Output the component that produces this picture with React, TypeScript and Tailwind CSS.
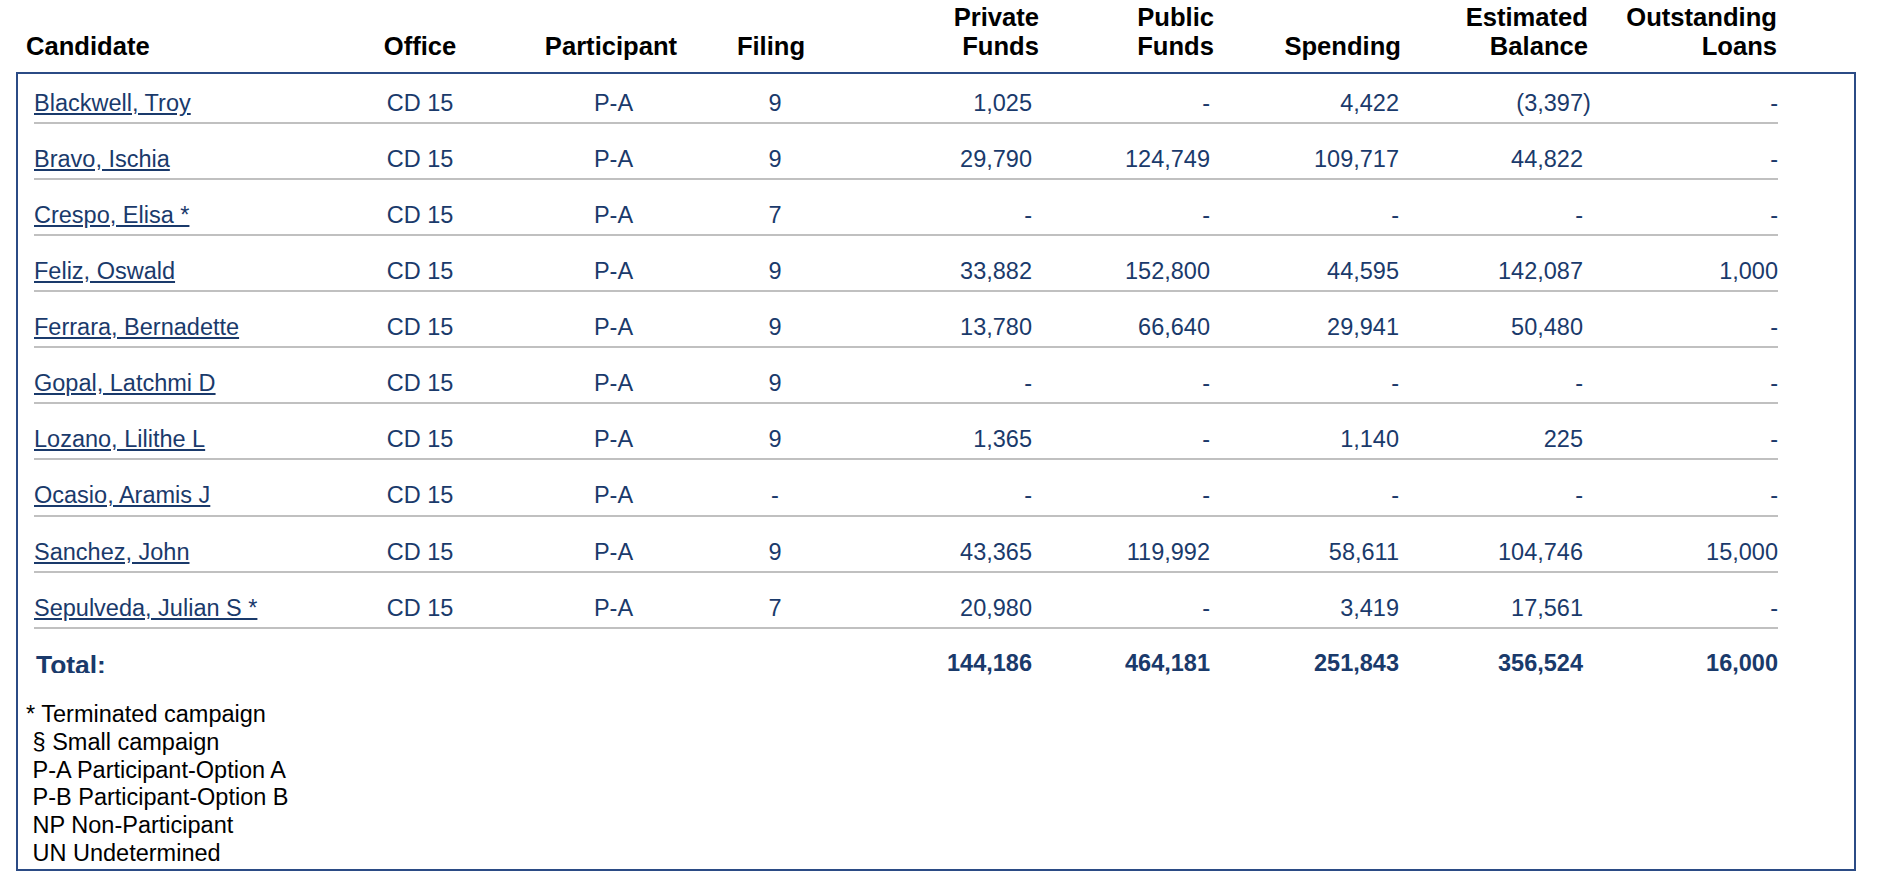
const bodyCols =
  "grid grid-cols-[306px_160px_227px_96px_209px_178px_189px_184px_195px]";
const headCols =
  "grid grid-cols-[314px_160px_222px_98px_219px_175px_187px_187px_189px]";

type Row = {
  name: string;
  filing: string;
  priv: string;
  pub: string;
  spend: string;
  balance: string;
  loans: string;
};

const rows: Row[] = [
  { name: "Blackwell, Troy", filing: "9", priv: "1,025", pub: "-", spend: "4,422", balance: "(3,397)", loans: "-" },
  { name: "Bravo, Ischia", filing: "9", priv: "29,790", pub: "124,749", spend: "109,717", balance: "44,822", loans: "-" },
  { name: "Crespo, Elisa *", filing: "7", priv: "-", pub: "-", spend: "-", balance: "-", loans: "-" },
  { name: "Feliz, Oswald", filing: "9", priv: "33,882", pub: "152,800", spend: "44,595", balance: "142,087", loans: "1,000" },
  { name: "Ferrara, Bernadette", filing: "9", priv: "13,780", pub: "66,640", spend: "29,941", balance: "50,480", loans: "-" },
  { name: "Gopal, Latchmi D", filing: "9", priv: "-", pub: "-", spend: "-", balance: "-", loans: "-" },
  { name: "Lozano, Lilithe L", filing: "9", priv: "1,365", pub: "-", spend: "1,140", balance: "225", loans: "-" },
  { name: "Ocasio, Aramis J", filing: "-", priv: "-", pub: "-", spend: "-", balance: "-", loans: "-" },
  { name: "Sanchez, John", filing: "9", priv: "43,365", pub: "119,992", spend: "58,611", balance: "104,746", loans: "15,000" },
  { name: "Sepulveda, Julian S *", filing: "7", priv: "20,980", pub: "-", spend: "3,419", balance: "17,561", loans: "-" },
];

const notes = [
  "* Terminated campaign",
  "\u00a0§ Small campaign",
  "\u00a0P-A Participant-Option A",
  "\u00a0P-B Participant-Option B",
  "\u00a0NP Non-Participant",
  "\u00a0UN Undetermined",
];

function Balance({ value }: { value: string }) {
  // negative values hang the closing paren past the column edge
  if (value.startsWith("(")) return <span className="-mr-[7.8px]">{value}</span>;
  return <span>{value}</span>;
}

export default function App() {
  return (
    <div className="min-h-screen bg-white pt-[3px] font-['Liberation_Sans',Arial,sans-serif]">
      {/* Header */}
      <div
        className={`${headCols} mb-[10px] ml-[26px] items-end text-[25.6px] font-bold leading-[29.4px] text-black`}
      >
        <div>Candidate</div>
        <div className="text-center">Office</div>
        <div className="text-center">Participant</div>
        <div className="text-center">Filing</div>
        <div className="text-right">
          Private
          <br />
          Funds
        </div>
        <div className="text-right">
          Public
          <br />
          Funds
        </div>
        <div className="text-right">Spending</div>
        <div className="text-right">
          Estimated
          <br />
          Balance
        </div>
        <div className="text-right">
          Outstanding
          <br />
          Loans
        </div>
      </div>

      {/* Table box */}
      <div className="ml-[16px] w-[1840px] border-2 border-[#2b4b85] pb-[1px] text-[23.5px] text-[#1a3a6b]">
        <div className="w-[1760px] pl-[16px]">
          {rows.map((r) => (
            <div
              key={r.name}
              className={`${bodyCols} mb-[6px] border-b-2 border-[#c0c0c0] pb-[4.5px] pt-[16px] leading-[27.6px]`}
            >
              <div>
                <a href="#" className="text-[#1a3a6b] underline">
                  {r.name}
                </a>
              </div>
              <div className="text-center">CD 15</div>
              <div className="text-center">P-A</div>
              <div className="text-center">{r.filing}</div>
              <div className="text-right">{r.priv}</div>
              <div className="text-right">{r.pub}</div>
              <div className="text-right">{r.spend}</div>
              <div className="text-right">
                <Balance value={r.balance} />
              </div>
              <div className="text-right">{r.loans}</div>
            </div>
          ))}

          {/* Total */}
          <div className={`${bodyCols} items-start pt-[15.4px] font-bold leading-[27.6px]`}>
            <div className="h-[23px] overflow-hidden pl-[2px] text-[26.4px] leading-[30px]">Total:</div>
            <div />
            <div />
            <div />
            <div className="text-right">144,186</div>
            <div className="text-right">464,181</div>
            <div className="text-right">251,843</div>
            <div className="text-right">356,524</div>
            <div className="text-right">16,000</div>
          </div>
        </div>

        {/* Legend */}
        <div className="mt-[23px] pl-[8px] leading-[27.9px] text-black">
          {notes.map((n) => (
            <div key={n}>{n}</div>
          ))}
        </div>
      </div>
    </div>
  );
}
